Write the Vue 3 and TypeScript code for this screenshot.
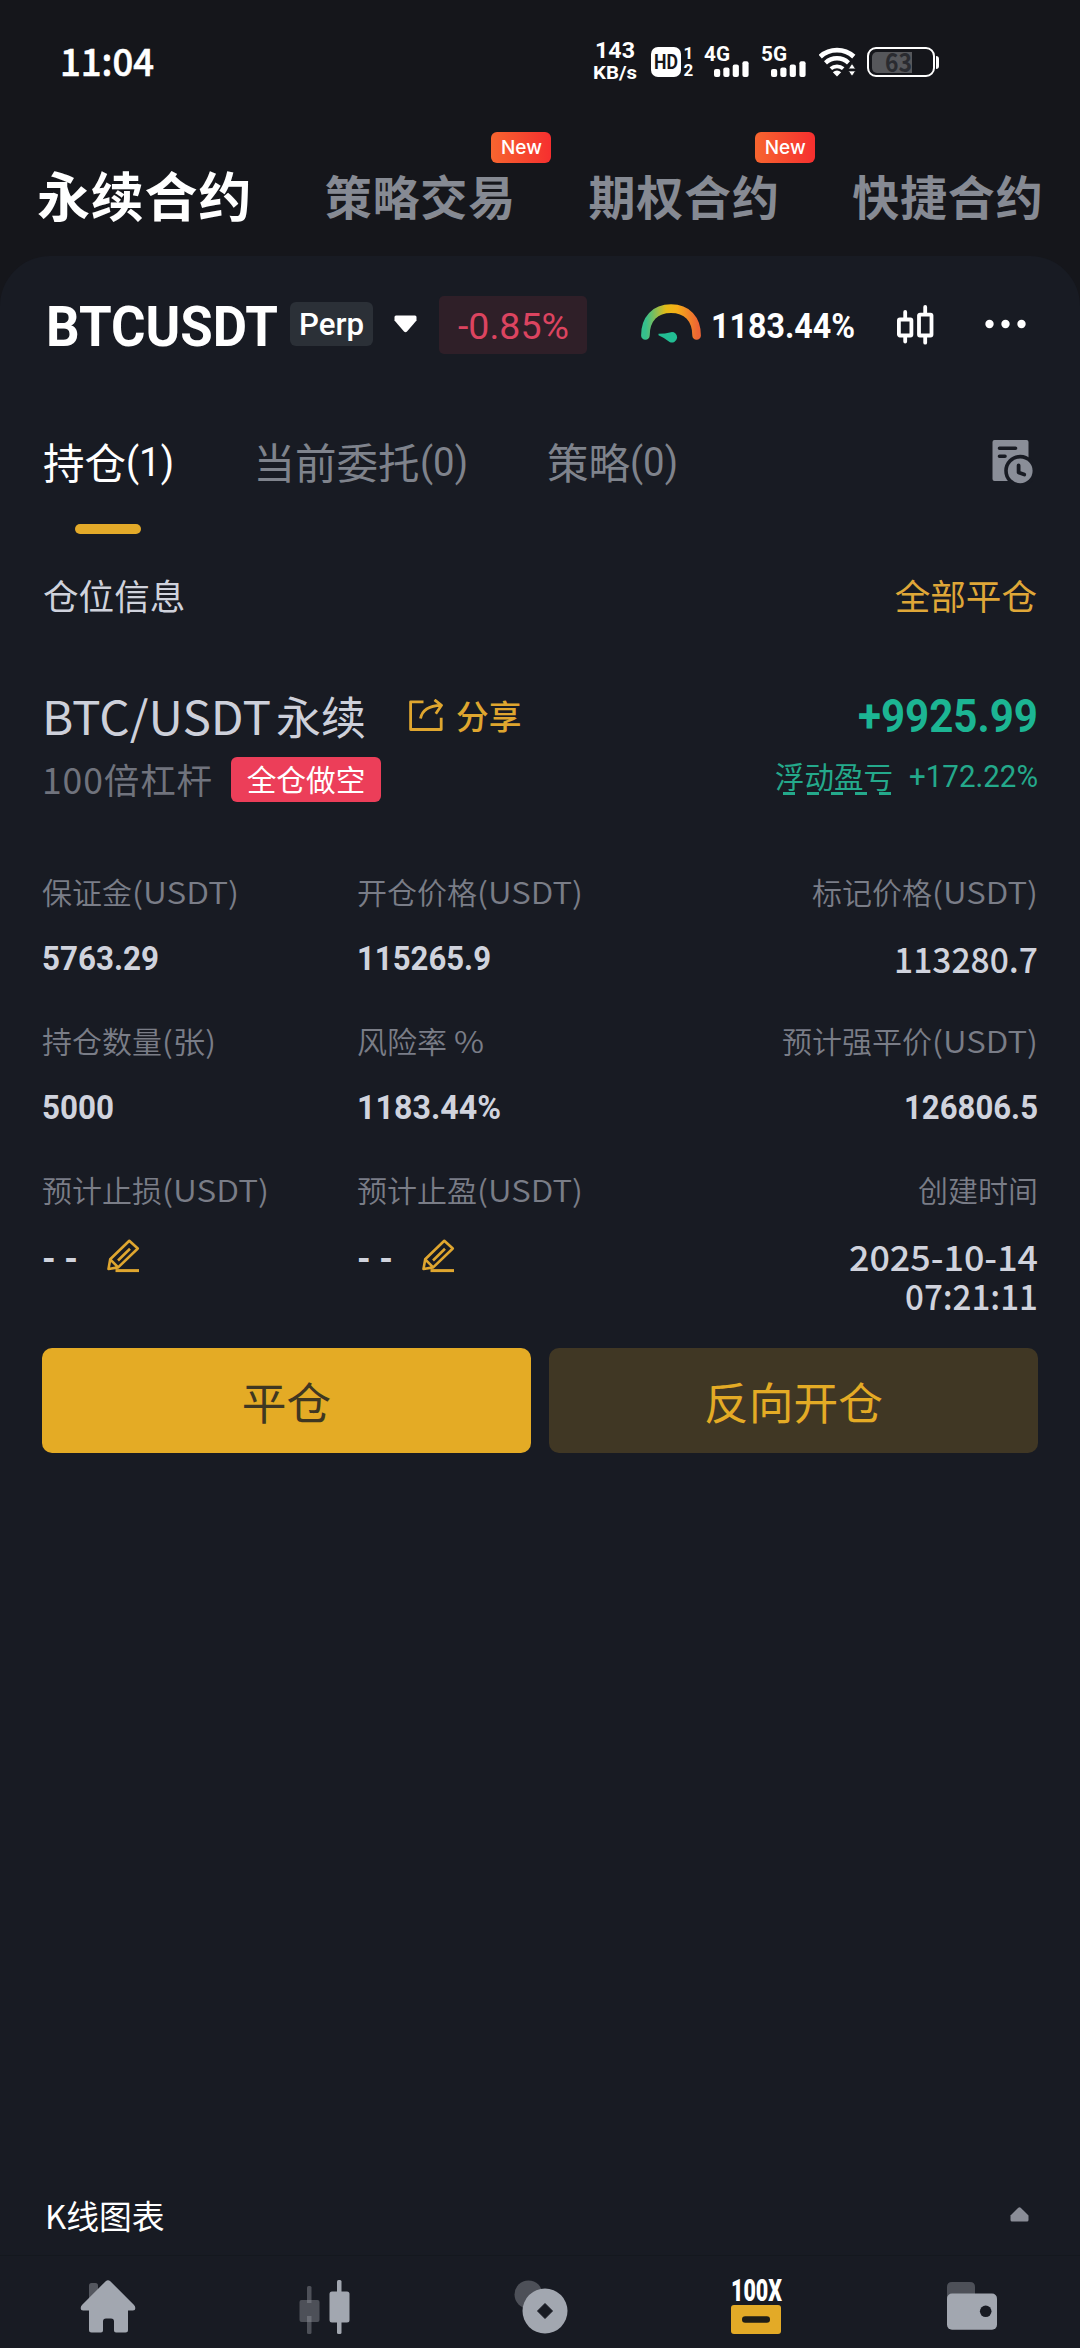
<script setup lang="ts">
interface NavItem { text: string; isNew?: boolean }
interface Cell {
  label: string
  unit?: string
  unitWidth?: number
  value?: string
  lines?: string[]
  width?: number
  plain?: boolean
  editable?: boolean
}

const navItems: NavItem[] = [
  { text: '永续合约' },
  { text: '策略交易', isNew: true },
  { text: '期权合约', isNew: true },
  { text: '快捷合约' },
]

const tabs = [
  { text: '持仓', count: '(1)', active: true },
  { text: '当前委托', count: '(0)', active: false },
  { text: '策略', count: '(0)', active: false },
]

const cells: Cell[] = [
  { label: '保证金', unit: '(USDT)', unitWidth: 107, value: '5763.29', width: 117 },
  { label: '开仓价格', unit: '(USDT)', unitWidth: 106, value: '115265.9', width: 134 },
  { label: '标记价格', unit: '(USDT)', unitWidth: 106, value: '113280.7', width: 144, plain: true },
  { label: '持仓数量', unit: '(张)', unitWidth: 54, value: '5000', width: 72 },
  { label: '风险率 ', unit: '%', unitWidth: 30, value: '1183.44%', width: 144 },
  { label: '预计强平价', unit: '(USDT)', unitWidth: 106, value: '126806.5', width: 134 },
  { label: '预计止损', unit: '(USDT)', unitWidth: 107, editable: true },
  { label: '预计止盈', unit: '(USDT)', unitWidth: 106, editable: true },
  { label: '创建时间', lines: ['2025-10-14', '07:21:11'] },
]

const lineWidths: Record<string, number> = { '2025-10-14': 189, '07:21:11': 133 }

// Condenses a piece of text horizontally so that it takes the given width.
const vFit = {
  mounted(el: HTMLElement, binding: { value: number | undefined }) {
    if (!binding.value) return
    const natural = el.getBoundingClientRect().width
    el.style.transformOrigin = '0 50%'
    el.style.transform = `scaleX(${binding.value / natural})`
    el.style.marginRight = `${binding.value - natural}px`
  },
}

const signalBars = [
  { x: 0, h: 8 },
  { x: 9.3, h: 9.5 },
  { x: 18.7, h: 12.5 },
  { x: 28.4, h: 15.7 },
]
</script>

<template>
  <div class="screen">
    <header class="status">
      <span v-fit="94" class="fit clock">11:04</span>
      <div class="indicators">
        <div class="speed">
          <span v-fit="40" class="fit speed-num">143</span>
          <span v-fit="44" class="fit speed-unit">KB/s</span>
        </div>
        <div class="hd">
          <span class="hd-box"><span v-fit="24" class="fit">HD</span></span>
          <span class="hd-sims"><span>1</span><span>2</span></span>
        </div>
        <div v-for="net in ['4G', '5G']" :key="net" class="signal">
          <span v-fit="26" class="fit net">{{ net }}</span>
          <svg class="bars" width="35" height="16" viewBox="0 0 35 16">
            <rect v-for="b in signalBars" :key="b.x" :x="b.x" :y="16 - b.h" width="6.2" :height="b.h" rx="2" fill="#fff" />
          </svg>
        </div>
        <svg class="wifi" width="37" height="30" viewBox="0 0 37 30" fill="none" stroke="#fff">
          <path d="M1.2 9.600A25 25 0 0 1 34.8 9.600" stroke-width="4.8" />
          <path d="M6.5 15.800A17 17 0 0 1 29.5 15.800" stroke-width="4.4" />
          <path d="M11.8 21.6A9.5 9.5 0 0 1 24.2 21.6" stroke-width="3.8" />
          <path d="M18 29.5l-4.2-4.2q4.2-3.4 8.4 0z" fill="#fff" stroke="none" />
          <path d="M33 16.5l3.6 5.4h-7.2zM33 29.3l3.6-5.4h-7.2z" fill="#fff" stroke="#15161b" stroke-width=".8" />
        </svg>
        <div class="battery">
          <div class="battery-body"><div class="battery-fill"></div><span v-fit="27" class="fit battery-num">63</span></div>
          <div class="battery-cap"></div>
        </div>
      </div>
    </header>

    <nav class="nav">
      <div v-for="(item, i) in navItems" :key="item.text" class="nav-item" :class="{ active: i === 0 }">
        {{ item.text }}
        <span v-if="item.isNew" class="new">New</span>
      </div>
    </nav>

    <main class="panel">
      <div class="symbol">
        <span v-fit="232" class="fit pair">BTCUSDT</span>
        <span class="perp"><span v-fit="65" class="fit">Perp</span></span>
        <svg class="caret" width="23" height="18" viewBox="0 0 23 18"><path d="M2 .5h19q1.5 0 1.5 1.500v3.5L13 16.5q-1.5 1.500-3 0L.5 5.500V2Q.5.5 2 .5z" fill="#fff" /></svg>
        <span class="change"><span v-fit="111" class="fit">-0.85%</span></span>
        <svg class="gauge" width="60" height="40" viewBox="0 0 60 40">
          <defs>
            <linearGradient id="gauge-arc" x1="0" y1="34" x2="60" y2="34" gradientUnits="userSpaceOnUse">
              <stop offset=".08" stop-color="#35c08d" />
              <stop offset=".42" stop-color="#e5bb16" />
              <stop offset=".6" stop-color="#f5ae18" />
              <stop offset=".95" stop-color="#ee6434" />
            </linearGradient>
          </defs>
          <path d="M4.400 31.500C4.400 15 14 4.600 30 4.600S55.600 15 55.600 31.500" fill="none" stroke="url(#gauge-arc)" stroke-width="8.6" stroke-linecap="round" />
          <path d="M17.500 29.800Q24 29.800 30 28.200A5.200 5.200 0 1 1 28.600 38Q23 33.500 17.500 31.200Z" fill="#22bd93" />
        </svg>
        <span v-fit="144" class="fit ratio">1183.44%</span>
        <svg class="kline" width="37" height="40" viewBox="0 0 37 40" fill="none" stroke="#fff" stroke-width="3.800">
          <rect x="1.900" y="14.500" width="12.500" height="16" rx="1" />
          <path d="M8.200 6.900V13M8.200 31v5.500M28.200 1.900V9M28.200 31v6.700" stroke-linecap="round" />
          <rect x="22" y="9.600" width="12.500" height="20.900" rx="1" />
        </svg>
        <svg class="more" width="41" height="10" viewBox="0 0 41 10" fill="#fff"><circle cx="4.500" cy="5" r="4.200" /><circle cx="20.500" cy="5" r="4.200" /><circle cx="36.500" cy="5" r="4.200" /></svg>
      </div>

      <div class="tabs">
        <div v-for="tab in tabs" :key="tab.text" class="tab" :class="{ active: tab.active }">
          <span>{{ tab.text }}</span><span v-fit="48" class="fit count">{{ tab.count }}</span>
          <i v-if="tab.active" class="underline"></i>
        </div>
        <svg class="history" width="41" height="44" viewBox="0 0 41 44">
          <rect x=".5" width="36" height="41" rx="2" fill="#8a8e98" />
          <path d="M7.500 8.300H23.500M7.500 16.300H13" stroke="#181b23" stroke-width="3.600" stroke-linecap="round" />
          <circle cx="28.200" cy="30.800" r="16" fill="#181b23" />
          <circle cx="28.200" cy="30.800" r="12.400" fill="#8a8e98" />
          <path d="M26.600 25.500V32.500L32.300 34.500" fill="none" stroke="#181b23" stroke-width="3.800" stroke-linecap="round" stroke-linejoin="round" />
        </svg>
      </div>

      <div class="section-head">
        <span>仓位信息</span>
        <span class="gold">全部平仓</span>
      </div>

      <div class="title-row">
        <span v-fit="229" class="fit title-pair">BTC/USDT</span>
        <span class="title-kind">永续</span>
        <svg class="share-icon" width="34" height="32" viewBox="0 0 34 32" fill="none" stroke="#dfa62f" stroke-width="2.800" stroke-linejoin="round">
          <path d="M14.500 2.800H1.600V30.500H32.200V18.800" />
          <path d="M11.500 19.500C13 11.500 19.500 6.600 32 6.300M25.500 .8L32.500 6.300L26.800 14.800" />
        </svg>
        <span class="share">分享</span>
        <span v-fit="180" class="fit pnl">+9925.99</span>
      </div>

      <div class="sub-row">
        <span class="leverage">100倍杠杆</span>
        <span class="side">全仓做空</span>
        <div class="floating">
          <span class="floating-label">浮动盈亏<i class="dashes"></i></span>
          <span v-fit="129" class="fit rate">+172.22%</span>
        </div>
      </div>

      <div class="grid">
        <div v-for="cell in cells" :key="cell.label" class="cell">
          <div class="label">{{ cell.label }}<span v-if="cell.unit" v-fit="cell.unitWidth" class="fit">{{ cell.unit }}</span></div>
          <div v-if="cell.value" class="value" :class="{ plain: cell.plain }"><span v-fit="cell.width" class="fit">{{ cell.value }}</span></div>
          <div v-else-if="cell.lines" class="value date">
            <div v-for="line in cell.lines" :key="line"><span v-fit="lineWidths[line]" class="fit">{{ line }}</span></div>
          </div>
          <div v-else class="value edit">
            <span v-fit="36" class="fit none">- -</span>
            <svg width="33" height="34" viewBox="0 0 33 34" fill="none" stroke="#dfa62f" stroke-width="2.600" stroke-linejoin="round">
              <path d="M1.500 30L3.200 20.300L22.300 1.800L30.800 9.500L11.200 28.400ZM3.200 20.300L11.200 28.400M11 21.500L23 9.800" />
              <path d="M8.500 31.600H32" stroke-width="3" />
            </svg>
          </div>
        </div>
      </div>

      <div class="actions">
        <button class="btn close">平仓</button>
        <button class="btn reverse">反向开仓</button>
      </div>

      <div class="spacer"></div>

      <div class="chart-row">
        <span>K线图表</span>
        <svg width="19" height="15" viewBox="0 0 19 15"><path d="M8.300 .8q1.200-1.100 2.400 0L18.500 8.500V13q0 1.500-1.500 1.500H2Q.5 14.500.5 13V8.500z" fill="#8a8d97" /></svg>
      </div>
    </main>

    <footer class="tabbar">
      <div class="tabbar-item">
        <svg width="56" height="54" viewBox="0 0 56 54">
          <rect x="9" y="3" width="9" height="20" rx="2.500" fill="#54575f" />
          <path d="M25.700 1.200q2.300-2 4.600 0L53.800 24.800q1.500 1.500 1.500 3.200 0 2.500-2.500 2.500H48V50q0 2.500-2.500 2.500H36q-2 0-2-2V41.500q0-3-3-3H26q-3 0-3 3V50.500q0 2-2 2H11.500Q9 52.500 9 50V30.500H3.200Q.7 30.500.7 28q0-1.700 1.500-3.200z" fill="#a2a7b0" />
        </svg>
      </div>
      <div class="tabbar-item">
        <svg width="51" height="54" viewBox="0 0 51 54">
          <g fill="#4d5058"><rect x="8" y="6" width="4.500" height="48" rx="1.500" /><rect x=".5" y="20" width="20" height="22" rx="2" /></g>
          <path d="M8 20h4.500v3H8zM8 36h4.500v6H8z" fill="#6a6d75" />
          <g fill="#a2a7b0"><rect x="38" y="0" width="4.500" height="54" rx="1.500" /><rect x="30.500" y="11.500" width="20" height="31" rx="2.500" /></g>
        </svg>
      </div>
      <div class="tabbar-item disc">
        <svg width="54" height="54" viewBox="0 0 54 54">
          <circle cx="14.500" cy="14.500" r="14" fill="#4d5058" />
          <circle cx="31" cy="31" r="22.500" fill="#a2a7b0" />
          <path d="M31 23.500L38.500 31L31 38.500L23.500 31Z" fill="#181b23" stroke="#181b23" />
        </svg>
      </div>
      <div class="tabbar-item futures">
        <span v-fit="51" class="fit lever">100X</span>
        <svg width="50" height="29" viewBox="0 0 50 29"><rect width="50" height="29" rx="3" fill="#e3aa27" /><rect x="11" y="11.300" width="28" height="6.400" rx="3.200" fill="#1e1d17" /></svg>
      </div>
      <div class="tabbar-item wallet">
        <svg width="50" height="48" viewBox="0 0 50 48">
          <path d="M0 16V5Q0 0 5 0H23Q28 0 28 5V16Z" fill="#4d5058" />
          <rect y="11.500" width="50" height="36.300" rx="5" fill="#a2a7b0" />
          <circle cx="38.700" cy="29.300" r="5.800" fill="#181b23" />
        </svg>
      </div>
    </footer>
  </div>
</template>

<style>
body {
  background: #15161b;
}
</style>

<style scoped>
.screen {
  width: 1080px;
  height: 2348px;
  box-sizing: border-box;
  display: flex;
  flex-direction: column;
  overflow: hidden;
  background: #15161b;
  color: #fff;
  font-family: "Noto Sans CJK SC", "Noto Sans", sans-serif;
  line-height: 1;
}
.fit {
  display: inline-block;
  white-space: nowrap;
}
svg {
  display: block;
  flex: none;
}

.status {
  height: 124px;
  display: flex;
  align-items: center;
  padding-left: 60px;
}
.clock {
  margin-bottom: 5px;
  font-size: 38px;
  font-weight: 500;
  -webkit-text-stroke: .6px #fff;
}
.indicators {
  margin-left: 439px;
  height: 36px;
  display: flex;
  align-items: center;
}
.speed {
  width: 44px;
  height: 42px;
  margin-bottom: 3px;
  display: flex;
  flex-direction: column;
  align-items: center;
  justify-content: space-between;
  font: 700 22px/22px Roboto, sans-serif;
}
.speed-unit {
  font-size: 18px;
  line-height: 18px;
}
.hd {
  display: flex;
  align-items: center;
  margin-left: 14px;
}
.hd-box {
  width: 30px;
  height: 30px;
  border-radius: 7px;
  background: #fff;
  color: #15161b;
  font: 700 20px/31px Roboto, sans-serif;
  display: flex;
  justify-content: center;
}
.hd-sims {
  display: flex;
  flex-direction: column;
  justify-content: space-between;
  align-items: center;
  height: 34px;
  margin-left: 2px;
  width: 11px;
  font: 700 17px/17px Roboto, sans-serif;
}
.signal {
  margin-left: 10px;
  width: 45px;
  height: 30px;
  display: flex;
  flex-direction: column;
  justify-content: space-between;
}
.signal + .signal {
  margin-left: 12px;
}
.net {
  align-self: flex-start;
  font: 700 20.500px/15px Roboto, sans-serif;
}
.bars {
  margin: -1px 0 0 10px;
}
.wifi {
  margin-left: 13px;
}
.battery {
  display: flex;
  align-items: center;
  margin-left: 11px;
}
.battery-body {
  box-sizing: border-box;
  width: 68px;
  height: 30px;
  border: 2px solid #fff;
  border-radius: 9px;
  padding: 2.500px 3px;
  display: flex;
}
.battery-fill {
  width: 40px;
  border-radius: 5px 0 0 5px;
  background: #56575b;
}
.battery-num {
  margin-left: -27px;
  color: #2a2b30;
  font-size: 26px;
  line-height: 18px;
  font-weight: 700;
}
.battery-cap {
  width: 3px;
  height: 13px;
  margin-left: 1px;
  border-radius: 0 5px 5px 0;
  background: #fff;
}

.nav {
  height: 132px;
  box-sizing: border-box;
  padding: 8px 36px 0 37px;
  display: flex;
  align-items: center;
  gap: 72px;
  color: #868a93;
  font-size: 47px;
  letter-spacing: .8px;
  font-weight: 700;
}
.nav-item {
  position: relative;
  width: 192px;
  white-space: nowrap;
}
.nav-item.active {
  width: 216px;
  color: #fff;
  font-size: 53px;
}
.new {
  position: absolute;
  right: -35px;
  top: -39px;
  width: 60px;
  height: 31px;
  border-radius: 6px;
  background: linear-gradient(90deg, #f7652f, #f62f2f);
  color: #fff;
  font: 500 19px/32px Inter, sans-serif;
  letter-spacing: 0;
  text-align: center;
}

.panel {
  flex: 1;
  display: flex;
  flex-direction: column;
  border-radius: 50px 50px 0 0;
  background: #181b23;
}
.symbol {
  height: 140px;
  display: flex;
  align-items: center;
  padding-left: 46px;
  font-family: Roboto, sans-serif;
}
.pair {
  margin-top: 2px;
  font-size: 55px;
  font-weight: 700;
}
.perp {
  width: 83px;
  height: 44px;
  margin: 0 0 5px 12px;
  border-radius: 6px;
  background: #2b3037;
  font-size: 31px;
  line-height: 46px;
  font-weight: 500;
  text-align: center;
}
.caret {
  margin: 0 0 4px 21px;
}
.change {
  width: 148px;
  height: 58px;
  margin: 0 0 2px 22px;
  border-radius: 5px;
  background: #2f1f28;
  color: #dc4460;
  font-size: 37px;
  line-height: 61px;
  text-align: center;
}
.gauge {
  margin: 0 0 4px 54px;
}
.ratio {
  margin-left: 10px;
  font-size: 34.500px;
  font-weight: 700;
}
.kline {
  margin: 0 0 3px 42px;
}
.more {
  margin: 0 0 4px 51px;
}

.tabs {
  height: 138px;
  display: flex;
  align-items: center;
  padding-left: 43px;
  color: #7f838c;
  font-size: 41.500px;
}
.tab {
  position: relative;
  height: 138px;
  box-sizing: border-box;
  padding-bottom: 6px;
  margin-right: 79.500px;
  display: flex;
  align-items: center;
  white-space: nowrap;
}
.tab.active {
  color: #fff;
}
.count {
  font-family: Roboto, sans-serif;
  font-size: 41px;
}
.underline {
  position: absolute;
  left: 32px;
  bottom: 0;
  width: 66px;
  height: 10px;
  border-radius: 5px;
  background: #e3aa29;
}
.history {
  margin: 0 47px 6px auto;
}

.section-head {
  height: 124px;
  box-sizing: border-box;
  padding: 0 43px 3px;
  display: flex;
  align-items: center;
  justify-content: space-between;
  color: #cfd2dc;
  font-size: 35.600px;
}
.gold {
  color: #dfa738;
}

.title-row {
  height: 92px;
  box-sizing: border-box;
  padding: 22px 42px 0 42px;
  display: flex;
  align-items: center;
  color: #cdd0da;
}
.title-pair {
  font-size: 46px;
}
.title-kind {
  margin-left: 5px;
  font-size: 45px;
}
.share-icon {
  margin: 0 0 0 43px;
}
.share {
  margin-left: 13px;
  color: #dfa62f;
  font-size: 32.700px;
  font-weight: 500;
}
.pnl {
  margin-left: auto;
  padding-top: 3px;
  color: #1cb593;
  font: 700 45.500px/1 Roboto, sans-serif;
}

.sub-row {
  height: 60px;
  padding: 0 42px 0 42px;
  display: flex;
  align-items: center;
}
.leverage {
  color: #70737d;
  font-size: 35.500px;
  letter-spacing: .9px;
  margin-bottom: 3px;
}
.side {
  width: 150px;
  height: 45px;
  margin: 0 0 2px 18px;
  border-radius: 6px;
  background: #ec3e59;
  font-size: 29.700px;
  line-height: 44px;
  text-align: center;
}
.floating {
  margin: 0 0 6px auto;
  display: flex;
  align-items: center;
  color: #24a98b;
}
.floating-label {
  position: relative;
  font-size: 29.500px;
  margin-bottom: 3px;
}
.dashes {
  position: absolute;
  left: 8px;
  bottom: -5px;
  width: 108px;
  height: 3px;
  background: repeating-linear-gradient(90deg, #24a98b 0 12px, transparent 12px 24px);
}
.rate {
  margin-left: 16px;
  font: 400 30.500px/1 Roboto, sans-serif;
}

.grid {
  height: 538px;
  box-sizing: border-box;
  padding: 53px 42px 0 42px;
  display: grid;
  grid-template-columns: 315px 300px 1fr;
  grid-auto-rows: 149.200px;
  align-content: start;
}
.label {
  height: 57px;
  line-height: 57px;
  color: #7a7d87;
  font-size: 30px;
  font-weight: 350;
  white-space: nowrap;
}
.value {
  height: 77px;
  line-height: 77px;
  color: #d0d3dd;
  font-family: Roboto, sans-serif;
  font-size: 33.500px;
  font-weight: 700;
}
.value.plain,
.value.date {
  font-family: "Noto Sans CJK SC", sans-serif;
  font-size: 34.500px;
  font-weight: 500;
}
.cell:nth-child(3n) {
  text-align: right;
}
.date {
  height: auto;
  padding-top: 19px;
  line-height: 39px;
}
.edit {
  display: flex;
  align-items: center;
}
.none {
  padding-top: 5px;
  font-size: 35px;
}
.edit svg {
  margin: 0 0 2px 29px;
}

.actions {
  display: flex;
  gap: 18px;
  padding: 0 42px;
}
.btn {
  flex: 1;
  height: 105px;
  border: 0;
  border-radius: 10px;
  padding: 0;
  font-family: inherit;
  font-size: 44.700px;
}
.close {
  background: #e4ab25;
  color: #3f3722;
}
.reverse {
  background: #403724;
  color: #e4ab25;
}
.spacer {
  flex: 1;
}
.chart-row {
  height: 76px;
  box-sizing: border-box;
  border-bottom: 1px solid #14181e;
  padding: 0 51px 4px 45px;
  display: flex;
  align-items: center;
  justify-content: space-between;
  font-size: 32.800px;
}
.chart-row svg {
  margin-bottom: 2px;
}

.tabbar {
  height: 92px;
  display: flex;
  background: #181b23;
}
.tabbar-item {
  flex: 1;
  padding-top: 24px;
  display: flex;
  flex-direction: column;
  align-items: center;
}
.disc svg {
  margin-left: 2px;
}
.wallet {
  padding-top: 26px;
}
.lever {
  font: 900 31px/22px Roboto, sans-serif;
  margin-bottom: 3px;
}
</style>
